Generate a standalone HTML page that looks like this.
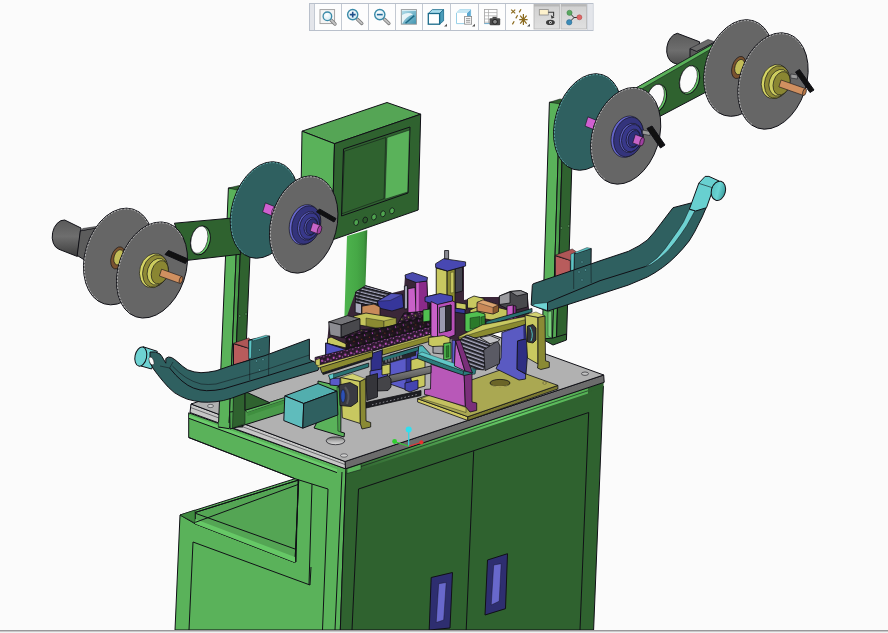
<!DOCTYPE html>
<html><head><meta charset="utf-8"><title>CAD view</title>
<style>
html,body{margin:0;padding:0;background:#fbfbfb;overflow:hidden;font-family:"Liberation Sans",sans-serif}
svg{display:block;position:absolute;left:0;top:0}
</style></head><body>
<svg width="888" height="633" viewBox="0 0 888 633" shape-rendering="geometricPrecision">
<rect width="888" height="633" fill="#fbfbfb"/>
<clipPath id="vp"><rect x="0" y="0" width="888" height="630"/></clipPath>
<g id="model" stroke="#101016" stroke-width="1" stroke-linejoin="round" clip-path="url(#vp)">
<g id="cabinet">
<!-- left light-green body -->
<polygon points="188.7,412.8 346,468.8 340.3,630 175,630 180,515 295,478.7 188.7,437.5" fill="#5ab25a"/>
<polygon points="189,415 337,469.2 337,472.4 189,418.2" fill="#6ccc6c" stroke="none"/>
<!-- tray interior -->
<polygon points="195,512.5 298.7,480 295,562.5 195,523.7" fill="#54a554"/>
<polyline points="195,512.5 298.7,480 295,562.5 195,523.7 195,512.5" fill="none"/>
<polygon points="195,519 295,557 295,562.5 195,523.7" fill="#66c866" stroke="none"/>
<polyline points="180,515 195,523.7" fill="none"/>
<polygon points="180,515 195,510 195,523 " fill="#3f8a3f" stroke-width="0.5"/>
<polyline points="195.4,513.3 295,549" fill="none"/>
<polyline points="195.4,522.3 298,484.5" fill="none"/>
<!-- front panel of tray -->
<polyline points="189,630 193,542 310,585 311,567" fill="none"/>
<!-- skirt lines -->
<polyline points="189,418.4 337,472.6" fill="none"/>
<polyline points="188.7,437.5 295,478.7 328,489" fill="none"/>
<!-- columns -->
<polyline points="298,480 296,562" fill="none"/>
<polyline points="312,484 309,585" fill="none"/>
<polyline points="328,489 322.5,630" fill="none"/>
<polyline points="342,472 335,630" fill="none"/>
<!-- front dark face -->
<polygon points="346,468.8 603.4,386 593.6,630 340.3,630" fill="#2f622f"/>
<!-- door frame lines -->
<polyline points="352,630 358.5,489 588.7,412.5 580,630" fill="none"/>
<polyline points="473.7,451.2 466.2,630" fill="none" stroke-width="1"/>
<!-- handles -->
<polygon points="431.2,577.5 452.5,572.5 450,628 429.2,630" fill="#2e2e70"/>
<polygon points="438.7,583.7 446.2,582.5 443.7,620 436.2,622.5" fill="#6868cc" stroke-width="0.4"/>
<polygon points="487.5,560 507.5,553.7 505.5,608.7 485,615" fill="#2e2e70"/>
<polygon points="493.7,565 501.2,563.7 499.2,601.2 491.2,605" fill="#6868cc" stroke-width="0.4"/>
</g>

<g id="table">
<defs><linearGradient id="hl" x1="0" y1="0" x2="0.12" y2="1"><stop offset="0" stop-color="#4aa04a"/><stop offset="0.45" stop-color="#66cc66"/><stop offset="1" stop-color="#2f622f"/></linearGradient></defs>
<!-- right/front side thickness -->
<polygon points="345,468 603.7,382 603.4,387 347,473.5" fill="#2f622f" stroke="none"/>
<polygon points="361,464 588,388.3 588,393.5 361,469.5" fill="url(#hl)" stroke="none"/>
<polyline points="361,466.5 588,390.8" fill="none" stroke-width="0.6"/>
<polygon points="347,468.6 361,464 361,469.5 347,473.5" fill="#5ab25a" stroke-width="0.5"/>
<polygon points="345,461.5 603.7,375 604.2,382.3 345.5,468.8" fill="#6c6c6c"/>
<!-- left side thickness -->
<polygon points="191,404 345,461.5 345.5,468.8 190,412.5" fill="#c6c6c6"/>
<polyline points="190.5,407.5 345,464.5" fill="none" stroke-width="0.5"/>
<!-- top -->
<polygon points="191,404 448,318.7 603.7,375 345,461.5" fill="#b1b1b1"/>
<!-- holes -->
<ellipse cx="210.5" cy="406" rx="3" ry="1.6" fill="#cfcfcf" stroke-width="0.5"/>
<defs><linearGradient id="hg" x1="0" y1="0" x2="0" y2="1"><stop offset="0" stop-color="#6a6a6a"/><stop offset="0.5" stop-color="#b0b0b0"/><stop offset="1" stop-color="#dcdcdc"/></linearGradient></defs>
<ellipse cx="335.5" cy="440.8" rx="9.3" ry="3.9" fill="url(#hg)" stroke-width="0.7"/>
<ellipse cx="344" cy="455.5" rx="3.5" ry="1.7" fill="#cfcfcf" stroke-width="0.5"/>
<ellipse cx="585" cy="373.7" rx="3.5" ry="1.7" fill="#c4c4c4" stroke-width="0.6"/>
</g>

<g id="frame">
<!-- left post -->
<defs><linearGradient id="pg" x1="0" y1="0" x2="1" y2="0"><stop offset="0" stop-color="#5ab25a"/><stop offset="1" stop-color="#3a843a"/></linearGradient></defs>
<polygon points="228.4,188.0 239.0,188.0 229.0,427.0 218.4,427.0" fill="#5ab25a"/>
<polygon points="239.0,188.0 243.0,188.0 233.0,427.0 229.0,427.0" fill="url(#pg)"/>
<polygon points="243.0,188.0 252.8,188.0 242.8,427.0 233.0,427.0" fill="#2f622f"/>
<polygon points="228.4,188 239,185.5 252.5,188 239,190.5" fill="#2f622f" stroke-width="0.5"/>
<circle cx="239.8" cy="316" r="1" fill="#7fe07f" stroke-width="0.5"/><circle cx="246" cy="314" r="1" fill="#7fe07f" stroke-width="0.5"/>
<polygon points="218.4,427 229,428.5 229.7,423 218.6,422" fill="#5ab25a" stroke="none"/><polyline points="218.4,427 229.3,428.7" fill="none"/>
<!-- left post foot -->
<polygon points="245,410.3 283.5,398 286,399.5 286,412 246,424.5 230,429 229.7,412" fill="#4a9a4a"/>
<polygon points="245,410.3 283.5,398 286,399.5 247.5,412.5" fill="#5ab25a" stroke-width="0.5"/>
<polygon points="233.5,395 245,392 245,423.8 232.5,428" fill="#2f622f" stroke-width="0.5"/>
<polygon points="245,391.5 270,402.8 245,410.3" fill="#2f622f"/>
<polygon points="247.5,412.5 286,400 286,403 247.5,416" fill="#3f8f3f" stroke="none"/>
<!-- left arm -->
<polygon points="174.4,223.2 230.3,218.2 241,254.2 187.7,260.3" fill="#2f622f"/>
<g transform="rotate(14 200.4 240.4)"><ellipse cx="200.4" cy="240.4" rx="9.6" ry="14.6" fill="#66c866"/><ellipse cx="199.2" cy="240" rx="8.2" ry="14" fill="#fbfbfb" stroke-width="0.6"/></g>
<!-- right post -->
<polygon points="549.4,102.3 559.8,102.3 552.5,339.0 542.1,339.0" fill="#5ab25a"/>
<polygon points="559.8,102.3 563.8,102.3 556.5,339.0 552.5,339.0" fill="url(#pg)"/>
<polygon points="563.8,102.3 573.8,102.3 566.5,339.0 556.5,339.0" fill="#2f622f"/>
<polygon points="549.4,102.3 560,99 574,101 563.8,104.5" fill="#2f622f" stroke-width="0.5"/>
<circle cx="561.5" cy="228" r="0.9" fill="#7fe07f" stroke-width="0.5"/><circle cx="568.5" cy="226" r="0.9" fill="#7fe07f" stroke-width="0.5"/>
<polygon points="542.1,339 553,345 566.5,340 566.5,334 553,338" fill="#2f622f"/>
<polygon points="548,312 551.5,311 551.5,338 548,336" fill="#7ad07a" stroke-width="0.4"/>
<!-- monitor stand -->
<defs><linearGradient id="sg" x1="0" y1="0" x2="1" y2="0"><stop offset="0" stop-color="#4eb44e"/><stop offset="0.55" stop-color="#46a846"/><stop offset="0.85" stop-color="#3f993f"/><stop offset="1" stop-color="#2f782f"/></linearGradient></defs>
<polygon points="347,236 367.3,230 365,300 344.3,320" fill="url(#sg)" stroke="none"/>
<!-- monitor -->
<polygon points="302,131.2 387,102.5 420.7,114.2 334.5,143.7" fill="#55a555"/>
<polygon points="302,131.2 334.5,143.7 332,240 300.5,226" fill="#5ab25a"/>
<polygon points="334.5,143.7 420.7,114.2 418.2,210 332,240" fill="#2f622f"/>
<polygon points="343.5,149 410,127 408,193 341.5,216" fill="none"/>
<polygon points="344.5,151.2 385.7,137.5 384,198.7 342,213.7" fill="#2f622f" stroke-width="0.5"/>
<polygon points="387,137.5 409.5,130 407.7,192 385,199.2" fill="#5ab25a" stroke-width="0.5"/>
<g fill="#4fa54f" stroke-width="0.7">
<ellipse cx="356.2" cy="222.5" rx="2.3" ry="3" transform="rotate(15 356.2 222.5)"/><ellipse cx="365.2" cy="220" rx="2.3" ry="3" transform="rotate(15 365.2 220)" fill="#2a5a2a"/><ellipse cx="374" cy="217" rx="2.3" ry="3" transform="rotate(15 374 217)"/><ellipse cx="383" cy="213.8" rx="2.3" ry="3" transform="rotate(15 383 213.8)"/><ellipse cx="392" cy="210.8" rx="2.3" ry="3" transform="rotate(15 392 210.8)"/>
</g>
</g>

<g id="chutes">
<defs><linearGradient id="cy1" x1="0" y1="0" x2="1" y2="0"><stop offset="0" stop-color="#58c0c0"/><stop offset="0.5" stop-color="#6ad4d4"/><stop offset="1" stop-color="#3b9c9c"/></linearGradient></defs>
<!-- right bracket -->
<polygon points="555.2,255.7 570.4,260.4 570.4,276 555.2,281" fill="#b85c5c"/>
<polygon points="555.2,255.2 572.3,249 576.5,251.9 570.4,260.4" fill="#ae5656" stroke-width="0.5"/>
<polygon points="574.2,253.8 591.2,248.5 590.8,284.6 573.7,288.9" fill="#2f6060"/>
<polygon points="570.8,254.2 574.2,252.8 573.7,271 570.8,272" fill="#5cc4c4" stroke-width="0.4"/>
<polygon points="574.2,252.8 587,247.6 591.2,248.5 576.5,253.5" fill="#5cc4c4" stroke-width="0.4"/>
<!-- right chute silhouette -->
<path d="M534,283.5 L573.7,270 L600,260.8 L628.5,251.3 Q640,246 647.4,240 Q655,232 660.7,223.8 L673,207.7 L691,203 L706,208 Q702,218 698.7,223.8 Q695,232 689.2,240.9 Q683,249 675.9,256 Q670,262 662.6,267.5 Q655,273 647.4,277 L628.5,285 L547.5,311.2 L531.2,305 L532.3,285.5 Q532.5,283.8 534,283.5Z" fill="#2f6060"/>
<!-- cyan floor strip -->
<path d="M645.5,266.5 Q651,263 657,258 Q665,250 672,239 Q678,231 683.5,222 L689.2,209.6 L695,210.5 L691,218 Q687,226 681.6,233.3 Q675,243 668.3,250.4 Q660,259 651,264.6Z" fill="#6ed2d2" stroke-width="0.5"/>
<path d="M547.5,302.5 L600,280.7 L645.5,266.5" fill="none"/>
<polygon points="535,303.7 547.5,302.5 547.5,310.5 532.5,305.6" fill="#6ed2d2" stroke-width="0.5"/>
<line x1="547.5" y1="302.5" x2="547.5" y2="311"/>
<line x1="573.7" y1="270" x2="573.7" y2="289" stroke-width="0.5"/><line x1="591" y1="264" x2="591.2" y2="283" stroke-width="0.5"/>
<circle cx="582" cy="262" r="0.9" fill="#6ed2d2" stroke-width="0.4"/><circle cx="579" cy="272" r="0.9" fill="#6ed2d2" stroke-width="0.4"/><circle cx="585.5" cy="270" r="0.9" fill="#6ed2d2" stroke-width="0.4"/><circle cx="582" cy="280" r="0.9" fill="#6ed2d2" stroke-width="0.4"/>
<!-- cyan strap + roll -->
<path d="M689.4,209.1 L698.9,183 L705.1,176.4 L708.9,176.4 L719.3,181.1 L713.2,188.7 L706.5,207.7 L695.6,211Z" fill="#68d0d0"/>
<ellipse cx="718.4" cy="190.8" rx="7" ry="9.8" transform="rotate(15 718.4 190.8)" fill="url(#cy1)"/>
<path d="M698.9,183.4 L712.7,187.8" fill="none" stroke-width="0.6"/>
<!-- left bracket -->
<polygon points="233.5,343.7 249.7,348.5 249.7,360 233.5,365.5" fill="#b85c5c"/>
<polygon points="233.5,343.2 248.7,338 251.6,340.9 249.7,348.5" fill="#ae5656" stroke-width="0.5"/>
<polygon points="248.7,340 269.6,336.1 268.6,375 249.7,379.8" fill="#2f6060"/>
<polygon points="248.9,341 251.8,340 251.3,358 248.9,359" fill="#5cc4c4" stroke-width="0.4"/>
<polygon points="251.8,339.5 266,335.2 269.6,336.1 253.5,340.8" fill="#5cc4c4" stroke-width="0.4"/>
<!-- left chute -->
<path d="M143,346.7 L157.3,351.3 L151.6,369 L141,366Z" fill="#6ed2d2"/>
<ellipse cx="140.8" cy="356.6" rx="5.8" ry="9.7" transform="rotate(12 140.8 356.6)" fill="#6ed2d2"/>
<path d="M150,352 Q156,351 160,354 L162,356.6 Q164,360 165.8,363.2 L165.8,358.5 Q168,356 171.5,357.5 Q175,359.5 178,362.3 Q183,367 187.6,369.8 Q194,372.5 201,372.7 Q208,372.5 216,370.8 L233,365 L265,355.6 L309.4,339 L309.4,359.5 L320,364.6 L318,370.3 L265,386 L231.3,398.3 Q223,401 216,401.7 Q208,402.5 201,402 Q194,401 187.6,399.3 Q180,396.5 174.3,392.6 Q168,387.5 163,381.2 Q157,374 153.5,369 L150,363Z" fill="#2f6060"/>
<ellipse cx="151.5" cy="361" rx="2.2" ry="4.2" transform="rotate(-20 151.5 361)" fill="#fbfbfb" stroke-width="0.5"/>
<path d="M169.6,368 Q176,376 182,381 Q188,386 193.3,388 Q200,390.5 206.6,390.7 Q215,390.8 223.7,388.8 L265,376.5 L314.2,361" fill="none"/>
<path d="M160,366 L169.6,368 L173,362" fill="none" stroke-width="0.5"/>
<path d="M172.4,366 Q179,373 185.7,377.4 Q193,382 201,384 Q208,385 216,384 L265,370 L309.4,355" fill="none" stroke-width="0.5"/>
<line x1="249.7" y1="361" x2="249.7" y2="380" stroke-width="0.5"/><line x1="268.8" y1="355" x2="268.6" y2="375" stroke-width="0.5"/>
<circle cx="259.5" cy="350" r="0.9" fill="#6ed2d2" stroke-width="0.4"/><circle cx="256.5" cy="361" r="0.9" fill="#6ed2d2" stroke-width="0.4"/><circle cx="263" cy="359.5" r="0.9" fill="#6ed2d2" stroke-width="0.4"/><circle cx="259.5" cy="370" r="0.9" fill="#6ed2d2" stroke-width="0.4"/>
<!-- cyan box + green bracket -->
<polygon points="318,381 337,385.5 341,388 340.7,432 344.5,433 344,437 314,428 318,420" fill="#5ab25a"/>
<polygon points="337,387 340.7,388.5 340.7,432 337.9,431" fill="#4aa04a" stroke-width="0.5"/>
<polygon points="284.8,395.9 318,383.6 337,391.2 303.7,403.5" fill="#52aeae"/>
<polygon points="284.8,395.9 303.7,403.5 302.8,428.2 283.8,420.6" fill="#5fbcbc"/>
<polygon points="303.7,403.5 337,391.2 337.9,414.9 302.8,428.2" fill="#2f6060"/>
</g>

<g id="machine" stroke-width="0.8" stroke="#101014">
<defs>
<pattern id="teeth" width="6" height="5" patternUnits="userSpaceOnUse" patternTransform="rotate(-15)">
<rect width="6" height="5" fill="#4a1c48"/><rect x="0.3" y="0.3" width="2.8" height="3.2" fill="#c452c4"/><rect x="3.4" y="2.4" width="2" height="2.2" fill="#d670d6"/><rect x="3.4" y="0.2" width="1.2" height="1" fill="#8a2a6a"/>
</pattern>
<pattern id="mix" width="7" height="6" patternUnits="userSpaceOnUse" patternTransform="rotate(-15)">
<rect width="7" height="6" fill="#5a245a"/><rect x="0.4" y="0.4" width="2.6" height="2.6" fill="#c858c8"/><rect x="3.6" y="3.2" width="2" height="2" fill="#c8c860"/><rect x="4" y="0.3" width="2.4" height="1.8" fill="#1c101c"/><rect x="0.6" y="3.6" width="1.8" height="1.8" fill="#9a3a9a"/>
</pattern>
<pattern id="teeth2" width="8" height="6" patternUnits="userSpaceOnUse" patternTransform="rotate(-15)">
<rect width="8" height="6" fill="#221420"/><rect x="0.5" y="3" width="2" height="2.4" fill="#b848b8"/><path d="M4,0.6 L7,0.6 L5.5,3Z" fill="#8a3030"/><rect x="3.2" y="4" width="1.2" height="1.2" fill="#c8c060"/>
</pattern>
<pattern id="fins" width="60" height="3.2" patternUnits="userSpaceOnUse" patternTransform="rotate(14)">
<rect width="60" height="3.2" fill="#a2a2b8"/><rect y="2" width="60" height="1.2" fill="#33333a"/>
</pattern>
<pattern id="fins2" width="60" height="3.6" patternUnits="userSpaceOnUse" patternTransform="rotate(20)">
<rect width="60" height="3.6" fill="#aaaac0"/><rect y="2.3" width="60" height="1.3" fill="#2a2a30"/>
</pattern>
<linearGradient id="rod" x1="0" y1="0" x2="0.3" y2="1"><stop offset="0" stop-color="#9c9c9c"/><stop offset="1" stop-color="#484848"/></linearGradient>
</defs>
<!-- yellow base plate -->
<polygon points="417.6,398.7 467.8,416.7 467.8,420.5 417.6,402" fill="#cfc862"/>
<polygon points="467.8,416.7 557.9,385.4 557.9,389 467.8,420.5" fill="#7a7830"/>
<polygon points="417.6,398.7 507.7,367.4 557.9,385.4 467.8,416.7" fill="#aaa852"/>
<polygon points="421,398.5 431,395 466,407.5 466,412.5" fill="#c4c060" stroke-width="0.4"/>
<ellipse cx="500" cy="383" rx="10" ry="3.6" fill="#6b6528"/><path d="M490.5,384 A10,3.2 0 0 0 509.5,384 A10,4.2 0 0 1 490.5,384Z" fill="#d6ce6a" stroke="none"/>
<ellipse cx="544.6" cy="383" rx="2" ry="1" fill="#d6ce6a" stroke-width="0.4"/>
<polygon points="329,322 347,316 355.6,292 365.6,285.6 392,293 404,290 405,276 427,278 428,296 436,294 436,266 464,264 464,300 478,297 499,297 520,291 527.5,293.5 530,318 530,324 484,336 460,341 431,336 372,351 346,358 327,344" fill="#3a2638" stroke="none"/>
<!-- back: grey air cylinder, blue block, orange, yellow -->
<polygon points="355.6,291.9 365.6,285.6 391.2,293 377.5,301.5 377.5,307 355.6,302.5" fill="url(#fins)"/>
<polygon points="355.2,302.5 361.5,304 361.5,314 355.2,312.5" fill="#a8a8bc"/>
<polygon points="377.5,301.2 391.2,293.5 402.5,294.4 403.7,307.5 392,311 378.7,308" fill="#36369a"/>
<polygon points="377.5,301.2 391.2,293.5 402.5,294.4 390,300.5" fill="#5252b8" stroke-width="0.4"/>
<polygon points="361.9,306.2 374,304 380,307 380,316.2 373.5,318 373.5,322 370,322 370,317 361.9,316" fill="#c88a5a"/>
<polygon points="353.7,316 366,313 396.2,318 396.2,326 384,329.5 353.7,324" fill="#c4c45c"/>
<polygon points="366,318 384,321 384,329.5 366,326" fill="#8a8a32" stroke-width="0.4"/>
<polygon points="384,321 396.2,318 396.2,326 384,329.5" fill="#a0a040" stroke-width="0.4"/>
<!-- left motor -->
<polygon points="328.7,321.9 347.5,315.6 360,318.7 341.2,325" fill="#747478"/>
<polygon points="328.7,321.9 341.2,325 341.2,337.5 330,335" fill="#8c8c92"/>
<polygon points="341.2,325 360,318.7 360,330 341.2,337.5" fill="#48484c"/>
<polygon points="327.5,338.7 331,337 347.5,344.5 346,348 327.5,343.5" fill="#c8c860"/>
<polygon points="325.6,343 340,347 340,356 325.6,356" fill="#5252c2"/>
<!-- left pillar group -->
<polygon points="404.4,286 407.5,285.5 407.5,308.7 404.4,309" fill="#a0a0b2"/>
<polygon points="408,288.7 415,287.5 416.2,313.7 408,314.5" fill="#c860c8"/>
<polygon points="416.2,282 426.9,281 428,311 416.2,312" fill="#8a2a8a"/>
<polygon points="416.2,282 418.8,281.8 418.8,311.8 416.2,312" fill="#c860c8" stroke="none"/>
<polygon points="405,275 412.5,272.5 427.5,277.5 426.9,281 416,282.5 405.6,278.5" fill="#4a4aae"/>
<!-- central tall column -->
<polygon points="444.6,250.5 448.6,250.5 448.6,259 444.6,259" fill="#8a8a92"/>
<polygon points="455,268.7 462.5,267 462.5,291 455,293" fill="#44444e"/>
<polygon points="446.9,271 455,269 455,310 446.9,307" fill="#8a8a30"/>
<polygon points="450.6,272.5 453.7,272 453.7,292.5 450.6,293" fill="#c8c860" stroke-width="0.3"/>
<polygon points="436.2,268 446.9,271 446.9,296 436.2,296" fill="#c8c860"/>
<polygon points="435.6,263.7 443.7,258.7 465.6,261.9 465.6,266 447.5,271 435.6,267.5" fill="#4848b2"/>
<polygon points="456,302.5 466,304 466,310 456,308.5" fill="#c8c860"/>
<polygon points="453.7,308 465,309.5 465,313.7 453.7,312" fill="#36369a"/>
<!-- right cluster -->
<polygon points="499.4,296 510,291.5 520.6,290.6 527.5,293.5 527.5,307 512,311 499.4,305" fill="#48484c"/>
<polygon points="510,291.5 520.6,290.6 527.5,293.5 517,296" fill="#858588"/>
<polygon points="499.4,296 510,292 510,303 499.4,304.5" fill="#9a9a9e"/>
<polygon points="467.5,299 474,296 484,298.5 484,309 467.5,308" fill="#c8c860"/>
<polygon points="484,304 508,310 508,316 496,321 470,316 470,310" fill="#c4c45c"/>
<polygon points="477,302.5 483,300 498.5,305 498.5,311.5 493,314 477,311" fill="#c88858"/>
<polygon points="477,302.5 483,300 498.5,305 493,307.5" fill="#dca470" stroke-width="0.4"/>
<polygon points="493,307.5 498.5,305 498.5,311.5 493,314" fill="#8a5a30" stroke-width="0.4"/>
<polygon points="507,306 513.3,305 513.3,322.5 507,322" fill="#c860c8"/>
<polygon points="513.3,305.5 516,306 516,317 520,317.5 520,323 513.3,322.5" fill="#8a2a8a"/>
<polygon points="486,321.5 532,308.5 532,312 486,325.5" fill="#2a7272"/>
<polygon points="465,313.7 477,311.5 485,314 485,332.5 476,335 465,331" fill="#50c050"/>
<polygon points="470,318 480,316.5 480,327 470,329" fill="#2a7a2a" stroke-width="0.4"/>
<polygon points="481,317 485,316 485,332.5 481,333.5" fill="#2a7a2a" stroke-width="0.4"/>
<!-- yellow diagonal beam right -->
<polygon points="482.5,325 526,316.5 530,318.5 530,324 484,336 460,341 458,337" fill="#8a8a30"/>
<polygon points="482.5,325 526,316.5 530,318.5 486,329.5 460,337.5 458,337" fill="#c8c860" stroke-width="0.4"/>
<!-- blue column right -->
<polygon points="501.9,332.5 523.7,325 528.7,324 529,338 517.5,341 517.1,369.3 525.6,374 525.6,379 519,380 496,368.7 501,358" fill="#5a5ac2"/>
<polygon points="517.5,341 528.9,338 526,374 517.1,369.3" fill="#2e2e82"/>
<polygon points="523.7,325 528.7,324 529,338 524,339.5" fill="#2e2e82" stroke-width="0.4"/>
<!-- yellow tall bracket right -->
<polygon points="525,315 536,312 545,316 538,317.5" fill="#d2d270" stroke-width="0.4"/>
<polygon points="525,315 538,317.5 538,364 527.5,358" fill="#c8c860"/>
<polygon points="538,317.5 545,316 545.5,360.8 549.3,362 549.3,367.4 540.8,369.5 537.5,368 538,364" fill="#8a8a34"/>
<polygon points="527.5,326 533,324.5 536,328 536,340 533,343 527.5,342" fill="#33333a"/><path d="M530,327 Q534,334 531,341" fill="none" stroke="#4cc0c0" stroke-width="1"/>
<!-- blue block under beam -->
<polygon points="371,353.7 382,350 382,372.5 371,372.5" fill="#30308a"/>
<polygon points="370,371 387.5,368 387.5,380 375,382 370,380" fill="#5252c2"/>
<polygon points="390,355 418.7,347 418.7,385 410,391 390,384" fill="#5a5ac8"/>
<polygon points="406,358 411,357 411,382.5 406,382.5" fill="#36369a" stroke-width="0.4"/>
<polygon points="382,365.6 390,364 390,373.7 382,375" fill="#c8c860"/>
<polygon points="411,360 425,356 425,386 418,388 411,380" fill="#c8c860"/>
<polygon points="405,383 418,380 418,389 410,392 405,390" fill="#4444b0"/>
<polygon points="330,378.7 340,378 340,386 330,385" fill="#5a5ac8"/>
<!-- main beam: dark top with details -->
<polygon points="325.8,343 346,349.5 346,360 330,364 325.8,360" fill="#5252c2"/>
<polygon points="341.2,337.5 360,330 396.2,326 404,313 428,311 431,301 431,322 428,316 346,338" fill="url(#mix)"/>
<polygon points="346,338 428,316 431,315.5 431,326.5 428,327 346,349.5" fill="url(#teeth2)"/>
<polygon points="315,357.5 346,349.5 428,327 431,326.5 431,334 421,337.5 372.5,351 320,366.5 315.6,364" fill="url(#teeth)"/>
<polygon points="315.6,360 320,358.5 320,366.5 315.6,364.5" fill="#c8c860" stroke-width="0.4"/>
<polygon points="316.5,366 372.5,350.5 372.5,352 320,368" fill="#c8c860" stroke-width="0.3"/>
<polygon points="320,367.5 372.5,351.5 372.5,357 322,373" fill="#8a8a30"/>
<polygon points="382.5,349 431,335 431,341 382.5,355" fill="#8a8a30"/>
<polygon points="382.5,348.5 431,334.5 431,336 382.5,350" fill="#c8c860" stroke-width="0.3"/>
<polygon points="322,373 372.5,357 372.5,359 323,375" fill="#1c1c20" stroke="none"/>
<polygon points="328.7,375.5 368.7,363 368.7,367 330,379.3" fill="#2a7272"/>
<polygon points="328.7,375 333.5,373.5 333.5,378.3 330,379.3" fill="#5cc8c8" stroke-width="0.4"/>
<polygon points="382.5,357.5 418.7,346.5 418.7,350.5 382.5,361.5" fill="#2a7272"/>
<polygon points="382.5,361.5 416,351.5 416,355.5 382.5,365" fill="#26262c" stroke-width="0.3"/>
<path d="M386,362.5 v-2.6 M389,361.6 v-2.6 M392,360.7 v-2.6 M395,359.8 v-2.6 M398,358.9 v-2.6 M401,358 v-2.6" stroke="#a0a0a8" stroke-width="1" fill="none"/>
<!-- central magenta frame with cylinder -->
<polygon points="425,297 440,293.5 452.5,296 452.5,301 437,305 425,301.5" fill="#4848b2"/>
<polygon points="431,301.5 437.5,304.5 437.5,338 431,336" fill="#c860c8"/>
<polygon points="437.5,304.5 452.5,301 455,302 455,335 441,340.5 437.5,338" fill="#b850b8"/>
<polygon points="439.4,307.5 451,305 451,330 439.4,333" fill="#9a9ab0"/>
<polygon points="445.5,306.3 451,305 451,330 445.5,331.5" fill="#2c2c32"/>
<polygon points="423,310 430,309 430,321 423,322" fill="#50c050"/>
<polygon points="428.7,337.5 443.7,335.5 450,338 450,345.5 436,348 428.7,345" fill="#c8c860"/>
<polygon points="433,346.5 443,346 443,354 433,353" fill="#a0a0a4"/>
<polygon points="443.7,343.5 451,342.5 451,358.7 443.7,360" fill="#50c050"/>
<polygon points="446,346 449,345.5 449,357 446,357.5" fill="#2a7a2a" stroke-width="0.3"/>
<polygon points="452,340 455.6,340.6 454.4,366 452,365" fill="#5a5ac8"/>
<!-- right motor -->
<polygon points="459.4,340 466.9,335 490,343.7 483.7,370 466.9,368" fill="url(#fins2)"/>
<polygon points="483.7,350 497.5,341 500,346 499.4,363.7 485,370.6" fill="#5a5a64"/>
<polygon points="480,337.5 490,335.5 500,339.5 497.5,341.5 490,343.7" fill="#c0c0c4"/>
<!-- cyan strip -->
<polygon points="418.7,346 422.5,345.6 430,353.7 430,358 418,354" fill="#50b8b8"/>
<polygon points="417.5,354.4 463.7,371.2 463,376 417.5,358.5" fill="#2a7a7a"/>
<polygon points="417.5,354.4 422,352 465,367 476,369 475,374 463.7,371.2" fill="#60c8c8" stroke-width="0.4"/>
<polygon points="463.7,371.2 476,369 475,374 463,376" fill="#2a7a7a" stroke-width="0.4"/>
<!-- magenta block -->
<polygon points="431,364.2 464.2,375.5 465.4,406.5 430.5,396 424.5,394.4 424.5,389.5 430.5,389" fill="#b858b8"/>
<polygon points="464.2,375.5 472,373.7 472,402 476.7,403 476.7,410.4 470,412 465.4,406.5" fill="#7a2f7a"/>
<polygon points="455.6,340.6 465,371 454.4,366" fill="#c060c0"/>
<polygon points="455.6,340.6 460.2,340 472.5,373 465,371" fill="#7a2f7a"/>
<!-- rod -->
<polygon points="389,375.5 431,366 431,373 389,382.9" fill="url(#rod)"/>
<!-- coupling -->
<polygon points="366,376.5 377.5,373.5 377.5,397 366.9,400.5" fill="#35353a"/>
<polygon points="377.5,378.7 388,375.5 391,379 391,387 388,390.5 377.5,391" fill="#444448"/>
<!-- black rail -->
<polygon points="366,402.5 421,390.5 421,395.5 366,408" fill="#1e1e22"/>
<path d="M372,404.8 L418,394.3" stroke="#8c8c92" stroke-width="1" stroke-dasharray="1.5 2.2" fill="none"/>
<!-- yellow bracket left -->
<polygon points="340.6,377.5 352.5,373.7 365.6,378.7 360,381.5" fill="#d2d270" stroke-width="0.4"/>
<polygon points="340.6,377.5 360,381.5 360.3,423.5 342.3,417.8" fill="#c8c860"/>
<polygon points="360,381.5 365.6,378.7 366,421 370.7,422.5 370.7,427 362,429 360.3,423.5" fill="#8a8a34"/>
<polygon points="339,385 350,382.5 357.5,386.5 357.5,402 351,406.5 340,405.5" fill="#3a3a42"/>
<path d="M345,387 Q351,394 347,404" fill="none" stroke="#55555c" stroke-width="2"/>
<ellipse cx="343" cy="396" rx="2.2" ry="6.5" fill="#2c50b4" stroke-width="0.4"/>
<!-- triad -->
<g stroke="none"><line x1="408.7" y1="446.3" x2="408.7" y2="431" stroke="#30d8e8" stroke-width="1.2"/><line x1="408.7" y1="446.3" x2="421" y2="442.5" stroke="#e83030" stroke-width="1.2"/><line x1="408.7" y1="446.3" x2="394.4" y2="441.5" stroke="#30d030" stroke-width="1.2"/>
<circle cx="408.7" cy="429.5" r="3" fill="#30e0f0"/><circle cx="394.6" cy="441.5" r="2.4" fill="#30d030"/><circle cx="421.3" cy="442.3" r="2.1" fill="#e83030"/></g>
</g>

<g id="spools">
<!-- L1 motor -->
<defs><linearGradient id="mg" x1="0" y1="0" x2="0" y2="1"><stop offset="0" stop-color="#5a5a5a"/><stop offset="0.45" stop-color="#6e6e6e"/><stop offset="1" stop-color="#3c3c3c"/></linearGradient></defs>
<path d="M64.7,220 L81,228 L77.4,256.5 L59,249.3 A10.5,15 10 0 1 64.7,220Z" fill="url(#mg)"/>
<polygon points="80.3,230.8 96,228 97,263 85.4,260.6 77.2,255.4" fill="#5c5c5c"/>
<polygon points="80.3,230.8 96,228 97.5,226.3 83,228.5" fill="#707070" stroke-width="0.5"/>
<g transform="translate(118.6 256.5) rotate(17)"><ellipse rx="33.5" ry="49.5" fill="#666666" stroke-width="0.9"/><path d="M17.9,-40.6 A32.6,48.6 0 1 0 -6.5,47.6" fill="none" stroke="#e8e8e8" stroke-width="0.6" stroke-dasharray="2 1.4"/></g>
<ellipse transform="translate(117.8 257.9) rotate(17)" rx="6.6" ry="11.4" fill="#7a5230" stroke-width="0.6" />
<ellipse transform="translate(118.8 257.3) rotate(17)" rx="4.7" ry="7.8" fill="#c2bc58" stroke-width="0.6" />
<g transform="translate(152 270) rotate(19)"><ellipse rx="33.5" ry="49.5" fill="#666666" stroke-width="0.9"/><path d="M17.9,-40.6 A32.6,48.6 0 1 0 -6.5,47.6" fill="none" stroke="#e8e8e8" stroke-width="0.6" stroke-dasharray="2 1.4"/></g>
<ellipse transform="translate(153.39999999999998 270.6) rotate(17)" rx="13.6" ry="17.4" fill="#d6d664" stroke-width="0.6" />
<ellipse transform="translate(155.2 271) rotate(17)" rx="12.2" ry="16.6" fill="#8e8a36" stroke-width="0.6" />
<ellipse transform="translate(157.6 271.8) rotate(17)" rx="10.2" ry="13.6" fill="#cccc5e" stroke-width="0.6" />
<ellipse transform="translate(159.79999999999998 272.3) rotate(17)" rx="8.2" ry="12" fill="#8a8632" stroke-width="0.6" />
<polygon points="161.6,269.2 182.1,276.6 179.9,283.4 159.4,276.0" fill="#d09060" stroke-width="0.6"/>
<ellipse transform="translate(181 280) rotate(17)" rx="1.62" ry="3.6" fill="#b87848" stroke-width="0.6" />
<polygon points="165,254.5 168.5,250.5 188,259 185.5,263.5" fill="#111"/>
<g transform="translate(264.5 210) rotate(17)"><ellipse rx="32.5" ry="49.5" fill="#2f6060" stroke-width="0.9"/><path d="M17.4,-40.6 A31.6,48.6 0 1 0 -6.3,47.6" fill="none" stroke="#7fd8d8" stroke-width="0.6" stroke-dasharray="2 1.4"/></g>
<polygon points="265.4,202.9 275.4,206.9 272.6,216.1 262.6,212.1" fill="#d060d0" stroke-width="0.6"/>
<ellipse transform="translate(274 211.5) rotate(17)" rx="2.16" ry="4.8" fill="#e080e0" stroke-width="0.6" />
<g transform="translate(303.7 224.5) rotate(14.5)"><ellipse rx="33" ry="49.5" fill="#666666" stroke-width="0.9"/><path d="M17.7,-40.6 A32.1,48.6 0 1 0 -6.4,47.6" fill="none" stroke="#e8e8e8" stroke-width="0.6" stroke-dasharray="2 1.4"/></g>
<ellipse transform="translate(304.7 224.7) rotate(17)" rx="15.0" ry="20.5" fill="#6666cc" stroke-width="0.6" />
<ellipse transform="translate(306.3 225) rotate(17)" rx="14.0" ry="19.6" fill="#34347c" stroke-width="0.6" />
<ellipse transform="translate(308.5 225.9) rotate(17)" rx="10.6" ry="14.6" fill="#5c5cc4" stroke-width="0.6" />
<ellipse transform="translate(309.5 226.1) rotate(17)" rx="9.6" ry="13.6" fill="#38388a" stroke-width="0.6" />
<ellipse transform="translate(310.90000000000003 226.5) rotate(17)" rx="6.6" ry="9.2" fill="#5656ba" stroke-width="0.6" />
<ellipse transform="translate(311.7 226.7) rotate(17)" rx="5.6" ry="8.2" fill="#30307a" stroke-width="0.6" />
<polygon points="312.8,222.6 320.8,225.6 318.2,234.0 310.2,231.0" fill="#c864c8" stroke-width="0.6"/>
<ellipse transform="translate(319.5 229.8) rotate(17)" rx="1.9800000000000002" ry="4.4" fill="#a040a0" stroke-width="0.6" />
<polygon points="316.5,212 319.5,209 336,218.5 334,222" fill="#111"/>
<path d="M677.3,33.3 L699.6,41.8 L696,71.4 L673,62.7 A10.5,15.2 10 0 1 677.3,33.3Z" fill="url(#mg)"/>
<polygon points="690,48.5 696.7,51.3 714.8,41.8 714.8,60 696.7,68 690,64" fill="#585858"/>
<polygon points="690,48.5 708,39.5 714.8,41.8 696.7,51.3" fill="#6a6a6a" stroke-width="0.5"/>
<polygon points="636,88 715,43 716,46 708,91 658.7,117" fill="#2f622f"/>
<polygon points="636,88 715,43 716,46 638,91" fill="#5ab25a" stroke-width="0.5"/>
<g transform="rotate(18 689.5 80)"><ellipse cx="689.5" cy="80" rx="9.6" ry="14.6" fill="#66c866"/><ellipse cx="688.3" cy="79.6" rx="8.2" ry="14" fill="#fbfbfb" stroke-width="0.6"/></g>
<g transform="rotate(18 656.5 98.5)"><ellipse cx="656.5" cy="98.5" rx="9.6" ry="14.6" fill="#66c866"/><ellipse cx="655.3" cy="98.1" rx="8.2" ry="14" fill="#fbfbfb" stroke-width="0.6"/></g>
<g transform="translate(587.8 122) rotate(17)"><ellipse rx="32.5" ry="49.5" fill="#2f6060" stroke-width="0.9"/><path d="M17.4,-40.6 A31.6,48.6 0 1 0 -6.3,47.6" fill="none" stroke="#7fd8d8" stroke-width="0.6" stroke-dasharray="2 1.4"/></g>
<polygon points="587.9,116.9 597.9,120.9 595.1,130.1 585.1,126.1" fill="#d060d0" stroke-width="0.6"/>
<ellipse transform="translate(596.5 125.5) rotate(17)" rx="2.16" ry="4.8" fill="#e080e0" stroke-width="0.6" />
<g transform="translate(625.7 135.8) rotate(17.5)"><ellipse rx="33.3" ry="49.6" fill="#666666" stroke-width="0.9"/><path d="M17.8,-40.7 A32.4,48.7 0 1 0 -6.5,47.7" fill="none" stroke="#e8e8e8" stroke-width="0.6" stroke-dasharray="2 1.4"/></g>
<ellipse transform="translate(627.0 136.7) rotate(17)" rx="15.5" ry="21.1" fill="#6666cc" stroke-width="0.6" />
<ellipse transform="translate(628.6 137) rotate(17)" rx="14.4" ry="20.2" fill="#34347c" stroke-width="0.6" />
<ellipse transform="translate(630.8000000000001 137.9) rotate(17)" rx="10.9" ry="15.0" fill="#5c5cc4" stroke-width="0.6" />
<ellipse transform="translate(631.8000000000001 138.1) rotate(17)" rx="9.9" ry="14.0" fill="#38388a" stroke-width="0.6" />
<ellipse transform="translate(633.2 138.5) rotate(17)" rx="6.8" ry="9.5" fill="#5656ba" stroke-width="0.6" />
<ellipse transform="translate(634.0 138.7) rotate(17)" rx="5.8" ry="8.4" fill="#30307a" stroke-width="0.6" />
<polygon points="635.3,134.5 643.3,137.5 640.7,145.9 632.7,142.9" fill="#c864c8" stroke-width="0.6"/>
<ellipse transform="translate(642 141.7) rotate(17)" rx="1.9800000000000002" ry="4.4" fill="#a040a0" stroke-width="0.6" />
<polygon points="642.5,130 650,131.5 650,135.5 642.5,134" fill="#999" stroke-width="0.5"/>
<polygon points="647,128.5 652,126 665,145 660.5,148" fill="#111"/>
<g transform="translate(738.7 68) rotate(17)"><ellipse rx="33.3" ry="49.5" fill="#666666" stroke-width="0.9"/><path d="M17.8,-40.6 A32.4,48.6 0 1 0 -6.5,47.6" fill="none" stroke="#e8e8e8" stroke-width="0.6" stroke-dasharray="2 1.4"/></g>
<ellipse transform="translate(738.7 67.5) rotate(17)" rx="6.6" ry="11.4" fill="#7a5230" stroke-width="0.6" />
<ellipse transform="translate(739.7 67) rotate(17)" rx="4.7" ry="7.8" fill="#c2bc58" stroke-width="0.6" />
<g transform="translate(773 81) rotate(18)"><ellipse rx="33.3" ry="49.5" fill="#666666" stroke-width="0.9"/><path d="M17.8,-40.6 A32.4,48.6 0 1 0 -6.5,47.6" fill="none" stroke="#e8e8e8" stroke-width="0.6" stroke-dasharray="2 1.4"/></g>
<ellipse transform="translate(775.2 81.6) rotate(17)" rx="13.6" ry="17.4" fill="#d6d664" stroke-width="0.6" />
<ellipse transform="translate(777 82) rotate(17)" rx="12.2" ry="16.6" fill="#8e8a36" stroke-width="0.6" />
<ellipse transform="translate(779.4 82.8) rotate(17)" rx="10.2" ry="13.6" fill="#cccc5e" stroke-width="0.6" />
<ellipse transform="translate(781.6 83.3) rotate(17)" rx="8.2" ry="12" fill="#8a8632" stroke-width="0.6" />
<polygon points="781.1,80.0 805.6,88.6 803.4,95.4 778.9,86.8" fill="#d09060" stroke-width="0.6"/>
<ellipse transform="translate(804.5 92) rotate(17)" rx="1.62" ry="3.6" fill="#b87848" stroke-width="0.6" />
<polygon points="790.8,74 797.4,75 797.4,79 790.8,78" fill="#999" stroke-width="0.5"/>
<polygon points="795.5,72 799.5,69.5 814,90 810,92.5" fill="#111"/>
</g>

</g>
<rect x="0" y="630" width="888" height="1.7" fill="#9a979a"/>
<rect x="0" y="631.7" width="888" height="1.3" fill="#f0f0f0"/>
<g id="toolbar">
<defs>
<linearGradient id="tbp" x1="0" y1="0" x2="0" y2="1"><stop offset="0" stop-color="#a9a9a9"/><stop offset="0.12" stop-color="#d2d2d2"/><stop offset="1" stop-color="#e0e0e0"/></linearGradient>
<linearGradient id="rp" x1="0" y1="0" x2="1" y2="1"><stop offset="0" stop-color="#b8e0ec"/><stop offset="1" stop-color="#3f94b0"/></linearGradient>
<radialGradient id="lens" cx="0.4" cy="0.35" r="0.7"><stop offset="0" stop-color="#ffffff"/><stop offset="1" stop-color="#cfe8f2"/></radialGradient>
</defs>
<rect x="309.5" y="3.5" width="283.5" height="27" fill="#fdfdfd" stroke="#b9c0cb" stroke-width="1"/>
<rect x="310" y="4" width="4.2" height="26" fill="#e3e5ea"/>
<g stroke="#c3c9d2" stroke-width="1">
<line x1="314.5" y1="4" x2="314.5" y2="30"/><line x1="341.5" y1="4" x2="341.5" y2="30"/><line x1="368.5" y1="4" x2="368.5" y2="30"/><line x1="395.5" y1="4" x2="395.5" y2="30"/><line x1="422.5" y1="4" x2="422.5" y2="30"/><line x1="450.5" y1="4" x2="450.5" y2="30"/><line x1="478.5" y1="4" x2="478.5" y2="30"/><line x1="505.5" y1="4" x2="505.5" y2="30"/><line x1="587.5" y1="4" x2="587.5" y2="30"/>
</g>
<rect x="534" y="4.5" width="25.5" height="24.5" fill="url(#tbp)" stroke="#b4b4b4" stroke-width="0.8"/>
<rect x="561" y="4.5" width="25.5" height="24.5" fill="url(#tbp)" stroke="#b4b4b4" stroke-width="0.8"/>
<rect x="587.5" y="4" width="5" height="26" fill="#e3e5ea"/>
<!-- 1 refit -->
<rect x="320" y="9.6" width="14.6" height="14" fill="#f4f4f4" stroke="#9c9c9c" stroke-width="0.9"/>
<line x1="331.2" y1="20.2" x2="335" y2="24" stroke="#7c7c7c" stroke-width="3.4" stroke-linecap="round"/><line x1="331.2" y1="20.2" x2="335" y2="24" stroke="#c4c4c4" stroke-width="1.8" stroke-linecap="round"/>
<circle cx="327.4" cy="16.3" r="4.3" fill="url(#lens)" stroke="#3a8aa8" stroke-width="1.3"/>
<!-- 2 zoom in -->
<line x1="357.4" y1="19.3" x2="361.8" y2="23.4" stroke="#7c7c7c" stroke-width="3.4" stroke-linecap="round"/><line x1="357.4" y1="19.3" x2="361.8" y2="23.4" stroke="#c4c4c4" stroke-width="1.8" stroke-linecap="round"/>
<circle cx="352.7" cy="14.6" r="5.1" fill="url(#lens)" stroke="#3a8aa8" stroke-width="1.4"/>
<path d="M349.8,14.6 H355.6 M352.7,11.7 V17.5" stroke="#1f4f8a" stroke-width="1.6" fill="none"/>
<!-- 3 zoom out -->
<line x1="384.5" y1="19.3" x2="388.9" y2="23.4" stroke="#7c7c7c" stroke-width="3.4" stroke-linecap="round"/><line x1="384.5" y1="19.3" x2="388.9" y2="23.4" stroke="#c4c4c4" stroke-width="1.8" stroke-linecap="round"/>
<circle cx="379.8" cy="14.6" r="5.1" fill="url(#lens)" stroke="#3a8aa8" stroke-width="1.4"/>
<path d="M376.9,14.6 H382.7" stroke="#1f6a9a" stroke-width="1.6" fill="none"/>
<!-- 4 repaint -->
<rect x="401.3" y="9.6" width="15.2" height="14.6" fill="url(#rp)" stroke="#9a9a9a" stroke-width="0.9"/>
<path d="M402,11 H416 V10.3 H402Z M402,24 V15 Q408,11.5 413,14.5 Q406,16 402,24Z" fill="#f2fafc" opacity="0.9"/>
<line x1="405.5" y1="23.2" x2="414.3" y2="15.6" stroke="#1d6a86" stroke-width="1.5"/>
<!-- 5 cube -->
<polygon points="428.3,13.5 432.3,9.6 443.6,9.6 439.6,13.5" fill="#a8dcec" stroke="#1a6a8a" stroke-width="0.8"/>
<polygon points="439.6,13.5 443.6,9.6 443.6,20.8 439.6,24.2" fill="#4a9cb8" stroke="#1a6a8a" stroke-width="0.8"/>
<rect x="428.3" y="13.5" width="11.3" height="10.7" fill="#ffffff" stroke="#1a6a8a" stroke-width="1.3"/>
<polygon points="444,26.6 447,26.6 447,23.8" fill="#555"/>
<!-- 6 saved orientations -->
<polygon points="456.5,13 460,9.6 470.6,9.6 470.6,20.5 467,23.6 456.5,23.6" fill="#ffffff" stroke="#8ccbe4" stroke-width="0.9"/>
<polygon points="467,13 470.6,9.6 470.6,20.5 467,23.6" fill="#5eaad2"/>
<polygon points="456.5,13 460,9.6 470.6,9.6 467,13" fill="#c8e8f4"/>
<rect x="464.6" y="16.5" width="7" height="7.7" fill="#f8f8f8" stroke="#8a8a8a" stroke-width="0.8"/>
<path d="M466,18.6 H470.3 M466,20.4 H470.3 M466,22.2 H470.3" stroke="#777" stroke-width="0.7"/>
<polygon points="472,26.6 475,26.6 475,23.8" fill="#555"/>
<!-- 7 view manager -->
<rect x="484.4" y="9.4" width="12.6" height="14" fill="#ffffff" stroke="#a0a0a0" stroke-width="0.8"/>
<path d="M484.4,12.6 H497 M484.4,15.8 H497 M484.4,19 H497 M484.4,22.2 H497 M488.5,9.4 V23.4" stroke="#a8a8a8" stroke-width="0.7" fill="none"/>
<line x1="484.4" y1="23.6" x2="492" y2="23.6" stroke="#6ab0d8" stroke-width="0.9"/>
<rect x="489.6" y="18.2" width="10.6" height="7" rx="1" fill="#4a4a4a"/><rect x="492.5" y="16.8" width="4.2" height="2" fill="#4a4a4a"/>
<circle cx="495" cy="21.8" r="2.4" fill="#888" stroke="#1c1c1c" stroke-width="0.9"/>
<!-- 8 datum display -->
<g stroke="#8a6a1e" stroke-width="1.2" fill="none" stroke-linecap="butt">
<path d="M511.2,9.6 L515.2,13.4 M515.2,9.6 L511.2,13.4"/>
<path d="M521,9.2 L519.2,12.4 M517.6,15.2 L515.8,18.4 M514.2,21.2 L512.4,24.4"/>
<path d="M519.2,19.6 H527.6 M523.4,14 V25 M520.2,15.6 L526.6,23.6 M526.6,15.6 L520.2,23.6"/>
</g>
<polygon points="527,26.6 530,26.6 530,23.8" fill="#555"/>
<!-- 9 annotation display -->
<rect x="539.3" y="9.6" width="9" height="5.4" fill="#fdf1cc" stroke="#8a8a8a" stroke-width="0.8"/>
<path d="M548.3,12.2 H553.6 V16.4" stroke="#3a3a3a" stroke-width="1.1" fill="none"/>
<polygon points="550.8,15 554.6,17.6 551.5,18.8" fill="#3a3a3a"/>
<ellipse cx="550.4" cy="22.4" rx="4.4" ry="2.7" fill="#3c3c3c"/><circle cx="550.4" cy="22.4" r="1.3" fill="#f4f4f4"/><circle cx="550.4" cy="22.4" r="0.6" fill="#222"/>
<!-- 10 spin center -->
<path d="M569.5,12.8 L574,17.6 L579.4,17.3 M574,17.6 L569.2,22.3" stroke="#333" stroke-width="1" fill="none"/>
<circle cx="569.5" cy="12.8" r="2.6" fill="#58a860" stroke="#3c7c44" stroke-width="0.5"/>
<circle cx="579.4" cy="17.3" r="2.5" fill="#e06868" stroke="#a84444" stroke-width="0.5"/>
<circle cx="569.2" cy="22.3" r="2.7" fill="#3c8cb8" stroke="#2a6488" stroke-width="0.5"/>
</g>

</svg>
</body></html>
